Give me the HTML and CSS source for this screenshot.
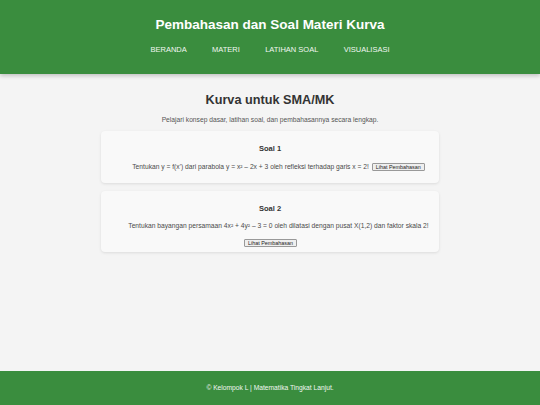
FILE: index.html
```html
<!DOCTYPE html>
<html lang="id">
<head>
<meta charset="utf-8">
<title>Pembahasan dan Soal Materi Kurva</title>
<link rel="stylesheet" href="styles.css">
</head>
<body>
<header class="site-header">
  <h1 class="site-title">Pembahasan dan Soal Materi Kurva</h1>
  <nav class="nav">
    <a href="#" class="nav-link">BERANDA</a>
    <a href="#" class="nav-link">MATERI</a>
    <a href="#" class="nav-link">LATIHAN SOAL</a>
    <a href="#" class="nav-link">VISUALISASI</a>
  </nav>
</header>
<main class="content">
  <h2 class="page-title">Kurva untuk SMA/MK</h2>
  <p class="lead">Pelajari konsep dasar, latihan soal, dan pembahasannya secara lengkap.</p>
  <section class="card">
    <h3 class="card-title">Soal 1</h3>
    <div class="question"><span class="q-text">Tentukan y = f(x') dari parabola y = x² – 2x + 3 oleh refleksi terhadap garis x = 2!</span> <button class="btn">Lihat Pembahasan</button></div>
  </section>
  <section class="card">
    <h3 class="card-title">Soal 2</h3>
    <div class="question"><span class="q-text">Tentukan bayangan persamaan 4x² + 4y² – 3 = 0 oleh dilatasi dengan pusat X(1,2) dan faktor skala 2!</span> <button class="btn">Lihat Pembahasan</button></div>
  </section>
</main>
<footer class="site-footer">
  <p class="footer-text">© Kelompok L | Matematika Tingkat Lanjut.</p>
</footer>
</body>
</html>
```
FILE: styles.css
```css
* { box-sizing: border-box; }
html, body { margin: 0; padding: 0; }
body {
  font-family: "Liberation Sans", Arial, sans-serif;
  background: #f4f4f4;
  color: #444;
  min-height: 100vh;
  display: flex;
  flex-direction: column;
}
.site-header {
  background: #3a8d3e;
  color: #fff;
  height: 73.5px;
  padding-top: 16.75px;
  display: flex;
  flex-direction: column;
  align-items: center;
  box-shadow: 0 2px 4px rgba(0,0,0,0.2);
  position: relative;
  z-index: 1;
}
.site-title {
  margin: 0;
  font-size: 13.5px;
  line-height: 15.5px;
  font-weight: bold;
  color: #fff;
}
.nav {
  margin-top: 14px;
  display: flex;
  gap: 25.3px;
}
.nav-link {
  color: #f2f7f2;
  text-decoration: none;
  font-size: 7.5px;
  line-height: 8.6px;
}
.content {
  flex: 1;
  width: 338px;
  margin: 0 auto;
  padding-top: 19.2px;
  text-align: center;
}
.page-title {
  margin: 0;
  font-size: 12.7px;
  line-height: 14.6px;
  color: #333;
}
.lead {
  margin: 8.9px 0 7.1px;
  font-size: 6.7px;
  line-height: 7.7px;
  color: #555;
}
.card {
  background: #f9f9f9;
  border-radius: 4px;
  box-shadow: 0 1px 3px rgba(0,0,0,0.1);
  padding: 5.2px 6px;
  margin-bottom: 7.7px;
}
.card-title {
  margin: 9.2px 0 1px;
  font-size: 7.5px;
  line-height: 8.6px;
  color: #333;
}
.question {
  font-size: 6.7px;
  line-height: 9px;
  text-align: center;
}
.q-text {
  display: inline-block;
  white-space: nowrap;
  margin: 7.65px 0 7.65px 17px;
  line-height: 7.7px;
  color: #4a4a4a;
}
.btn {
  font-family: "Liberation Sans", Arial, sans-serif;
  font-size: 5.4px;
  line-height: 6px;
  padding: 0 3px;
  margin: 0 0 0 1px;
  border: 1px solid #999;
  border-radius: 1px;
  background: #efefef;
  color: #222;
  vertical-align: baseline;
}
.site-footer {
  background: #3a8d3e;
  color: #fff;
  height: 34px;
  display: flex;
  align-items: center;
  justify-content: center;
}
.footer-text {
  margin: 0;
  font-size: 6.7px;
  line-height: 7.7px;
  color: #f2f7f2;
}
```
